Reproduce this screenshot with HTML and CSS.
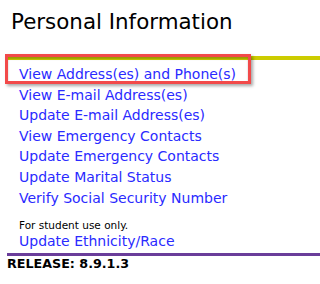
FILE: index.html
```html
<!DOCTYPE html>
<html>
<head>
<meta charset="utf-8">
<link rel="stylesheet" href="styles.css">
</head>
<body>
<div class="page">
  <h1 class="title">Personal Information</h1>
  <div class="menu">
    <div class="rule-top"></div>
    <div class="highlight"></div>
    <ul class="links">
      <li><a href="#">View Address(es) and Phone(s)</a></li>
      <li><a href="#">View E-mail Address(es)</a></li>
      <li><a href="#">Update E-mail Address(es)</a></li>
      <li><a href="#">View Emergency Contacts</a></li>
      <li><a href="#">Update Emergency Contacts</a></li>
      <li><a href="#">Update Marital Status</a></li>
      <li><a href="#">Verify Social Security Number</a></li>
    </ul>
    <p class="note">For student use only.</p>
    <ul class="links">
      <li><a href="#">Update Ethnicity/Race</a></li>
    </ul>
  </div>
  <div class="rule-bottom"></div>
  <div class="release">RELEASE: 8.9.1.3</div>
</div>
</body>
</html>
```
FILE: styles.css
```css
html, body {
  margin: 0;
  padding: 0;
  background: #ffffff;
}
.page {
  padding-left: 7px;
  font-family: "DejaVu Sans", Verdana, sans-serif;
}
.title {
  margin: 0;
  padding: 9px 0 0 4px;
  height: 47px;
  font-size: 21.4px;
  font-weight: normal;
  color: #000;
  line-height: 26px;
}
.menu {
  position: relative;
}
.rule-top {
  height: 4px;
  background: #cccc00;
}
.highlight {
  position: absolute;
  left: -2px;
  top: -2px;
  width: 240px;
  height: 24px;
  border: 3px solid #f24a4a;
  box-shadow: 2px 2px 3px rgba(0,0,0,0.35), inset 0 2px 2px rgba(0,0,0,0.25);
  pointer-events: none;
}
.links {
  list-style: none;
  margin: 0;
  padding: 0 0 0 12px;
}
.links li {
  font-size: 14px;
  line-height: 20.6px;
}
.links a {
  color: #2a2aff;
  text-decoration: none;
}
.menu > .links:first-of-type {
  padding-top: 4px;
}
.note {
  margin: 11px 0 0 12px;
  font-size: 10.5px;
  line-height: 12px;
  color: #000;
}
.rule-bottom {
  height: 3px;
  background: #6a3d9a;
  margin-top: 1px;
}
.release {
  font-size: 12.7px;
  font-weight: bold;
  line-height: 14px;
  padding-top: 1px;
  color: #000;
}
```
